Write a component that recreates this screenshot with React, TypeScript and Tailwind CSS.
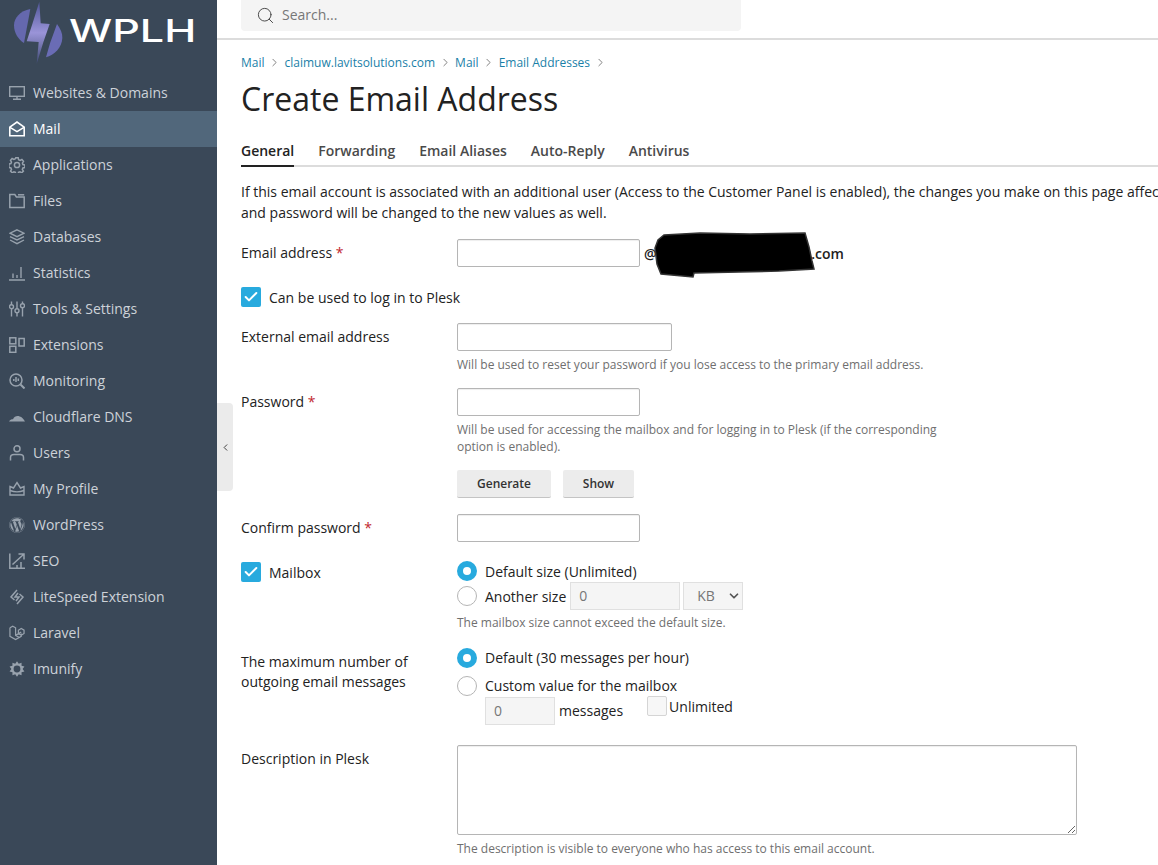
import { ChevronLeft, ChevronRight, Search, Check, ChevronDown } from 'lucide-react'
import { FaWordpress } from 'react-icons/fa'

const ICON = 'w-4 h-4'

function Monitor() {
  return (
    <svg viewBox="0 0 16 16" className={ICON} fill="none" stroke="currentColor" strokeWidth="1.4">
      <rect x="0.7" y="1.7" width="14.6" height="9.6" />
      <path d="M4 14.3h8M8 11.300v3" />
    </svg>
  )
}

function MailOpen() {
  return (
    <svg viewBox="0 0 16 16" className={ICON} fill="none" stroke="currentColor" strokeWidth="1.6">
      <path d="M0.8 6.2 8 1l7.2 5.200v8.600H0.8z" />
      <path d="M1 6.400 8 10.600l7-4.200" />
    </svg>
  )
}

function Gear() {
  return (
    <svg viewBox="0 0 16 16" className={ICON} fill="none" stroke="currentColor" strokeWidth="1.5">
      <path d="M6.800 0.800h2.400l.4 2 1.500.7 1.800-1 1.600 1.800-1.100 1.700.5 1.500 2 .5v2.400l-2 .5-.6 1.500 1.100 1.700-1.700 1.700-1.700-1-1.500.6-.4 2H6.800l-.4-2-1.500-.6-1.700 1-1.700-1.700 1-1.700-.6-1.500-2-.5V7l2-.5.6-1.500-1-1.700 1.600-1.800 1.800 1 1.500-.7z" />
      <circle cx="8" cy="8" r="2.600" />
    </svg>
  )
}

function Folder() {
  return (
    <svg viewBox="0 0 16 16" className={ICON} fill="none" stroke="currentColor" strokeWidth="1.5">
      <path d="M0.800 1.600h5l1.600 2.400h7.800v10.400H0.800z" />
      <path d="M9 1.800h6.200" />
    </svg>
  )
}

function Stack() {
  return (
    <svg viewBox="0 0 16 16" className={ICON} fill="none" stroke="currentColor" strokeWidth="1.4">
      <path d="M8 0.800 15 4.200 8 7.600 1 4.200z" />
      <path d="M1 7.600 8 11l7-3.400M1 11 8 14.600 15 11" />
    </svg>
  )
}

function Bars() {
  return (
    <svg viewBox="0 0 16 16" className={ICON} fill="none" stroke="currentColor" strokeWidth="1.4">
      <path d="M0 15h16M4 13V8.500M8 13V10M12 13V2" />
    </svg>
  )
}

function Sliders() {
  return (
    <svg viewBox="0 0 16 16" className={ICON} fill="none" stroke="currentColor" strokeWidth="1.4">
      <path d="M2.500 0.500v3M2.500 8v7.500M8 0.500v7M8 12v3.500M13.500 0.500v2M13.500 7v8.500" />
      <circle cx="2.500" cy="5.700" r="2" />
      <circle cx="8" cy="9.700" r="2" />
      <circle cx="13.500" cy="4.700" r="2" />
    </svg>
  )
}

function Blocks() {
  return (
    <svg viewBox="0 0 16 16" className={ICON} fill="none" stroke="currentColor" strokeWidth="1.5">
      <rect x="0.800" y="0.800" width="6" height="6" />
      <rect x="0.800" y="9.300" width="6" height="6" />
      <rect x="10" y="1.500" width="5.200" height="7.500" />
    </svg>
  )
}

function Monitoring() {
  return (
    <svg viewBox="0 0 16 16" className={ICON} fill="none" stroke="currentColor" strokeWidth="1.5">
      <circle cx="7" cy="7" r="6" />
      <path d="M11.500 11.500 15.500 15.500" strokeWidth="2" />
      <path d="M4.800 8V6M7 9V4M9.300 8V5.500" />
    </svg>
  )
}

function CloudMound() {
  return (
    <svg viewBox="0 0 16 16" className={ICON} fill="currentColor">
      <path d="M0 12.500C.8 10.800 2.500 10.300 4 10.300 5.200 7.600 8.300 6.300 10.600 7.600 12.800 8 14.600 10.200 16 12.500z" />
    </svg>
  )
}

function Person() {
  return (
    <svg viewBox="0 0 16 16" className={ICON} fill="none" stroke="currentColor" strokeWidth="1.5">
      <circle cx="8" cy="3.800" r="3" />
      <path d="M1.500 15.500v-3C1.500 10.500 3.200 9.500 5 9.500h6c1.800 0 3.500 1 3.500 3v3" />
    </svg>
  )
}

function Crown() {
  return (
    <svg viewBox="0 0 16 16" className={ICON} fill="none" stroke="currentColor" strokeWidth="1.4">
      <path d="M1 5.500 4.500 7 8 1.500 11.500 7 15 5.500v8.500H1z" />
      <path d="M1 9.500c4 1.600 10 1.600 14 0" />
    </svg>
  )
}

function SeoChart() {
  return (
    <svg viewBox="0 0 16 16" className={ICON} fill="none" stroke="currentColor" strokeWidth="1.5">
      <path d="M0.800 0.500v14.700H16" />
      <path d="M3.500 11.500 14.500 1.500M9.500 1h5.500v5.500M8 15v-3M12 15V9" />
    </svg>
  )
}

function LiteSpeed() {
  return (
    <svg viewBox="0 0 16 16" className={ICON} fill="none" stroke="currentColor" strokeWidth="1.5">
      <path d="M8 1 2 8l3.500 3M8 15l6-7-3.500-3M9 4 6 8h4l-3 4" />
    </svg>
  )
}

function Laravel() {
  return (
    <svg viewBox="0 0 17 17" className={ICON} fill="none" stroke="currentColor" strokeWidth="1.3">
      <path d="M1 3l3-1.800L7 3v8l3.500 2M1 3v9l6 3.500 6-3.500V9M7 11l6-3.500M10 5.500l3-1.800 3 1.800V9l-3 1.800L10 9z" />
    </svg>
  )
}

function Imunify() {
  // spiky gear: alternating outer and inner radius round the centre
  const points = Array.from({ length: 20 }, (_, i) => {
    const r = i % 2 === 0 ? 7.8 : 5.600
    const a = (i * Math.PI) / 10
    return `${(8 + r * Math.sin(a)).toFixed(2)} ${(8 - r * Math.cos(a)).toFixed(2)}`
  })
  return (
    <svg viewBox="0 0 16 16" className={ICON} fill="currentColor" fillRule="evenodd">
      <path d={`M${points.join('L')}zM8 4.600a3.400 3.400 0 1 0 0 6.800 3.400 3.400 0 0 0 0-6.800z`} />
    </svg>
  )
}

function Logo() {
  return (
    <div className="h-[75px] flex items-start pl-[13px] shrink-0">
      <svg viewBox="39 0 150 198" className="w-[50px] h-[66px] shrink-0">
        <defs>
          <linearGradient id="bolt" x1="0" y1="0" x2="0" y2="1">
            <stop offset="0" stopColor="#4f5597" />
            <stop offset="0.5" stopColor="#9a94d8" />
            <stop offset="1" stopColor="#3f4a74" />
          </linearGradient>
        </defs>
        <path d="M91 27C60 33 42 54 42 76c0 24 14 44 30 53l5-26z" fill="#6568ae" />
        <path d="M171 72c10 14 17 28 16 42-1 28-24 52-49 58l12-42z" fill="#6a6cb5" />
        <path d="M118 5l4 65 27 2-19 55-20 65 6-66-36-2 17-52z" fill="url(#bolt)" />
      </svg>
      <span className="ml-[6px] mt-[12px] text-[31px] leading-[37px] font-medium text-white font-['Inter',sans-serif] origin-left scale-x-[1.39] inline-block">WPLH</span>
    </div>
  )
}

const NAV = [
  { label: 'Websites & Domains', icon: <Monitor /> },
  { label: 'Mail', icon: <MailOpen />, active: true },
  { label: 'Applications', icon: <Gear /> },
  { label: 'Files', icon: <Folder /> },
  { label: 'Databases', icon: <Stack /> },
  { label: 'Statistics', icon: <Bars /> },
  { label: 'Tools & Settings', icon: <Sliders /> },
  { label: 'Extensions', icon: <Blocks /> },
  { label: 'Monitoring', icon: <Monitoring /> },
  { label: 'Cloudflare DNS', icon: <CloudMound /> },
  { label: 'Users', icon: <Person /> },
  { label: 'My Profile', icon: <Crown /> },
  { label: 'WordPress', icon: <FaWordpress size={16} /> },
  { label: 'SEO', icon: <SeoChart /> },
  { label: 'LiteSpeed Extension', icon: <LiteSpeed /> },
  { label: 'Laravel', icon: <Laravel /> },
  { label: 'Imunify', icon: <Imunify /> },
]

function Sidebar() {
  return (
    <aside className="w-[217px] shrink-0 bg-[#3a4858] flex flex-col">
      <Logo />
      <nav className="flex flex-col">
        {NAV.map(({ label, icon, active }) => (
          <div
            key={label}
            className={`h-9 flex items-center gap-[8px] pl-[9px] text-sm ${active ? 'bg-[#51677b] text-white' : 'text-[#cdd2d8]'}`}
          >
            <span className={active ? 'text-white' : 'text-[#98a2ad]'}>{icon}</span>
            {label}
          </div>
        ))}
      </nav>
    </aside>
  )
}

function Req() {
  return <span className="text-[#c1272d]"> *</span>
}

function Field({ w }: { w: string }) {
  return <div className={`${w} h-7 bg-white border border-[#b5b5b5] rounded-[2px] shadow-[inset_0_1px_1px_rgba(0,0,0,0.07)]`} />
}

function Checkbox() {
  return (
    <span className="w-5 h-5 shrink-0 rounded-[2px] bg-[#28aade] flex items-center justify-center">
      <Check size={16} strokeWidth={3} className="text-white" />
    </span>
  )
}

function Radio({ on }: { on?: boolean }) {
  return on ? (
    <span className="w-5 h-5 shrink-0 rounded-full border-[6px] border-[#28aade] bg-white" />
  ) : (
    <span className="w-5 h-5 shrink-0 rounded-full border border-[#b5b5b5] bg-white" />
  )
}

function Help({ children }: { children: React.ReactNode }) {
  return <p className="text-xs leading-[17px] text-[#6f6f6f]">{children}</p>
}

function Form() {
  return (
    <div className="text-sm text-[#222]">
      <div className="flex mt-4">
        <div className="w-[216px] pt-1">Email address<Req /></div>
        <Field w="w-[183px]" />
        <div className="relative ml-1 pt-[5px] font-semibold whitespace-nowrap">
          @<span className="tracking-[0.16px]">claimuw.lavitsolutions</span>.com
          {/* scribbled-out domain */}
          <svg viewBox="654 231 165 50" className="absolute left-[10px] -top-[8px] w-[165px] h-[50px]">
            <path d="M664 235 700 233l50 1 55-1 4 14 3 14 2 8-35 2-40 1-45 1-1 4-32-3-4-10-2-16 3-8z" fill="#000" stroke="#333" strokeWidth="1.500" />
          </svg>
        </div>
      </div>
      <div className="flex items-center gap-2 mt-5 h-5">
        <Checkbox />
        <span className="pt-[2px]">Can be used to log in to Plesk</span>
      </div>
      <div className="flex mt-4">
        <div className="w-[216px] pt-1">External email address</div>
        <div>
          <Field w="w-[215px]" />
          <div className="mt-[5px]"><Help>Will be used to reset your password if you lose access to the primary email address.</Help></div>
        </div>
      </div>
      <div className="flex mt-[15px]">
        <div className="w-[216px] pt-1">Password<Req /></div>
        <div>
          <Field w="w-[183px]" />
          <div className="mt-[5px] w-[490px]"><Help>Will be used for accessing the mailbox and for logging in to Plesk (if the corresponding option is enabled).</Help></div>
          <div className="flex gap-3 mt-[15px]">
            <button className="w-[94px] h-7 bg-[#ececec] border-b border-[#c4c4c4] rounded-[2px] text-xs font-semibold text-[#333] font-['Open_Sans',sans-serif]">Generate</button>
            <button className="w-[71px] h-7 bg-[#ececec] border-b border-[#c4c4c4] rounded-[2px] text-xs font-semibold text-[#333] font-['Open_Sans',sans-serif]">Show</button>
          </div>
        </div>
      </div>
      <div className="flex mt-4">
        <div className="w-[216px] pt-1">Confirm password<Req /></div>
        <Field w="w-[183px]" />
      </div>
      <div className="flex mt-[19px]">
        <div className="w-[216px] h-5 flex items-center gap-2 self-start mt-px">
          <Checkbox />
          <span className="pt-[2px]">Mailbox</span>
        </div>
        <div>
          <div className="flex items-center gap-2 h-5">
            <Radio on />
            <span className="pt-[2px]">Default size (Unlimited)</span>
          </div>
          <div className="flex items-center gap-2 h-7 mt-px">
            <Radio />
            <span className="pt-[2px]">Another size</span>
            <div className="flex items-center gap-[3px] -ml-[4px]">
              <div className="w-[110px] h-7 border border-[#e0e0e0] bg-[#f5f5f5] px-2 leading-[26px] text-[#777]">0</div>
              <div className="w-[60px] h-7 border border-[#e0e0e0] bg-[#f5f5f5] flex items-center justify-between pl-[13px] pr-[1px] text-[#777]">
                KB
                <ChevronDown size={14} strokeWidth={3} className="text-[#555]" />
              </div>
            </div>
          </div>
          <div className="mt-1"><Help>The mailbox size cannot exceed the default size.</Help></div>
        </div>
      </div>
      <div className="flex mt-[17px]">
        <div className="w-[216px] leading-5 pt-[4px]">The maximum number of<br />outgoing email messages</div>
        <div>
          <div className="flex items-center gap-2 h-5">
            <Radio on />
            Default (30 messages per hour)
          </div>
          <div className="flex items-center gap-2 h-5 mt-2">
            <Radio />
            Custom value for the mailbox
          </div>
          <div className="flex items-start ml-7 mt-px">
            <div className="w-[70px] h-7 border border-[#e0e0e0] bg-[#f5f5f5] px-2 leading-[26px] text-[#777]">0</div>
            <span className="ml-1 mt-1">messages</span>
            <span className="w-5 h-5 ml-6 -mt-px border border-[#d5d5d5] bg-[#f7f7f7] rounded-[2px]" />
            <span className="ml-[2px]">Unlimited</span>
          </div>
        </div>
      </div>
      <div className="flex mt-5">
        <div className="w-[216px] pt-1">Description in Plesk</div>
        <div>
          <textarea className="block w-[620px] h-[90px] border border-[#b5b5b5] rounded-[2px] shadow-[inset_0_1px_1px_rgba(0,0,0,0.07)]" />
          <div className="mt-[5px]"><Help>The description is visible to everyone who has access to this email account.</Help></div>
        </div>
      </div>
    </div>
  )
}

export default function App() {
  const crumbs = ['Mail', 'claimuw.lavitsolutions.com', 'Mail', 'Email Addresses']
  const tabs = ['General', 'Forwarding', 'Email Aliases', 'Auto-Reply', 'Antivirus']
  return (
    <div className="relative h-[865px] w-[1158px] overflow-hidden flex bg-white font-['Open_Sans',sans-serif]">
      <Sidebar />
      <main className="flex-1 min-w-0">
        <div className="h-10 border-b-2 border-[#dcdcdc] pl-6">
          <div className="w-[500px] h-[31px] bg-[#f4f4f4] rounded-b-[4px] flex items-center pl-[15px] pb-[1px] gap-[7px] text-sm text-[#777]">
            <Search size={19} strokeWidth={1.200} className="text-[#444]" />
            Search...
          </div>
        </div>
        <div className="pl-6">
          <div className="flex items-center text-xs text-[#1a7fa8] mt-[14px] h-[17px]">
            {crumbs.map((c, i) => (
              <span key={i} className="flex items-center">
                {c}
                <ChevronRight size={13} strokeWidth={1.500} className="text-[#666] mx-[3.500px]" />
              </span>
            ))}
          </div>
          <h1 className="text-[32px] leading-10 text-[#222] mt-2">Create Email Address</h1>
          <div className="flex gap-6 mt-[18px] border-b-2 border-[#dcdcdc] h-[30px]">
            {tabs.map((t, i) => (
              <div key={t} className={`text-sm font-semibold h-[30px] pt-[4px] ${i === 0 ? 'text-[#222] border-b-2 border-[#222]' : 'text-[#4a4a4a]'}`}>{t}</div>
            ))}
          </div>
          <p className="text-sm leading-[21px] text-[#222] mt-[14px] w-[960px] whitespace-nowrap">
            If this email account is associated with an additional user (Access to the Customer Panel is enabled), the changes you make on this page affect the user's login<br />
            and password will be changed to the new values as well.
          </p>
          <Form />
        </div>
      </main>
      <div className="absolute left-[217px] top-[403px] w-4 h-[88px] bg-[#ebebeb] rounded-r-[4px] flex items-center justify-center">
        <ChevronLeft size={11} strokeWidth={2} className="text-[#333]" />
      </div>
    </div>
  )
}
